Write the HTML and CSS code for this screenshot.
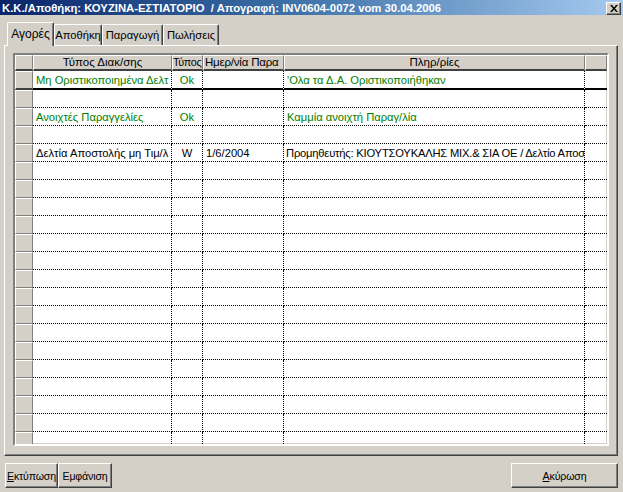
FILE: index.html
```html
<!DOCTYPE html>
<html lang="el">
<head>
<meta charset="utf-8">
<title>Απογραφή</title>
<link rel="stylesheet" href="styles.css">
</head>
<body>
<div class="window">
  <div class="titlebar">
    <span class="title-text">K.K./Αποθήκη: ΚΟΥΖΙΝΑ-ΕΣΤΙΑΤΟΡΙΟ &nbsp;/ Απογραφή: INV0604-0072 vom 30.04.2006</span>
    <span class="close-btn"><svg width="8" height="7" viewBox="0 0 8 7"><path d="M0 0h2l2 2.5L6 0h2L5 3.5 8 7H6L4 4.5 2 7H0l3-3.5z" fill="#000"/></svg></span>
  </div>
  <div class="content">
    <div class="tabs">
      <div class="tab active">Αγορές</div>
      <div class="tab t2">Αποθήκη</div>
      <div class="tab t3">Παραγωγή</div>
      <div class="tab t4">Πωλήσεις</div>
    </div>
    <div class="panel">
      <div class="grid">
        <table>
          <colgroup>
            <col class="c0"><col class="c1"><col class="c2"><col class="c3"><col class="c4"><col class="c5">
          </colgroup>
          <thead>
            <tr><th class="sel"></th><th>Τύπος Διακ/σης</th><th class="lft narrow">Τύπος</th><th class="lft">Ημερ/νία Παρα</th><th>Πληρ/ρίες</th><th class="last"></th></tr>
          </thead>
          <tbody>
            <tr class="green frozen"><td class="sel"></td><td>Μη Οριστικοποιημένα Δελτ</td><td class="ctr">Ok</td><td></td><td>'Ολα τα Δ.Α. Οριστικοποιήθηκαν</td><td class="last"></td></tr>
            <tr><td class="sel"></td><td></td><td></td><td></td><td></td><td class="last"></td></tr>
            <tr class="green"><td class="sel"></td><td>Ανοιχτές Παραγγελίες</td><td class="ctr">Ok</td><td></td><td>Καμμία ανοιχτή Παραγ/λία</td><td class="last"></td></tr>
            <tr><td class="sel"></td><td></td><td></td><td></td><td></td><td class="last"></td></tr>
            <tr><td class="sel"></td><td>Δελτία Αποστολής μη Τιμ/λ</td><td class="ctr">W</td><td>1/6/2004</td><td class="tight">Προμηθευτής: ΚΙΟΥΤΣΟΥΚΑΛΗΣ ΜΙΧ.&amp; ΣΙΑ ΟΕ / Δελτίο Αποσ</td><td class="last"></td></tr>
            <tr><td class="sel"></td><td></td><td></td><td></td><td></td><td class="last"></td></tr>
            <tr><td class="sel"></td><td></td><td></td><td></td><td></td><td class="last"></td></tr>
            <tr><td class="sel"></td><td></td><td></td><td></td><td></td><td class="last"></td></tr>
            <tr><td class="sel"></td><td></td><td></td><td></td><td></td><td class="last"></td></tr>
            <tr><td class="sel"></td><td></td><td></td><td></td><td></td><td class="last"></td></tr>
            <tr><td class="sel"></td><td></td><td></td><td></td><td></td><td class="last"></td></tr>
            <tr><td class="sel"></td><td></td><td></td><td></td><td></td><td class="last"></td></tr>
            <tr><td class="sel"></td><td></td><td></td><td></td><td></td><td class="last"></td></tr>
            <tr><td class="sel"></td><td></td><td></td><td></td><td></td><td class="last"></td></tr>
            <tr><td class="sel"></td><td></td><td></td><td></td><td></td><td class="last"></td></tr>
            <tr><td class="sel"></td><td></td><td></td><td></td><td></td><td class="last"></td></tr>
            <tr><td class="sel"></td><td></td><td></td><td></td><td></td><td class="last"></td></tr>
            <tr><td class="sel"></td><td></td><td></td><td></td><td></td><td class="last"></td></tr>
            <tr><td class="sel"></td><td></td><td></td><td></td><td></td><td class="last"></td></tr>
            <tr><td class="sel"></td><td></td><td></td><td></td><td></td><td class="last"></td></tr>
            <tr><td class="sel"></td><td></td><td></td><td></td><td></td><td class="last"></td></tr>
          </tbody>
        </table>
      </div>
    </div>
    <div class="buttons">
      <div class="left-buttons">
        <button class="btn b-print"><u>Ε</u>κτύπωση</button>
        <button class="btn b-show">Εμφάνιση</button>
      </div>
      <button class="btn b-cancel"><u>Α</u>κύρωση</button>
    </div>
  </div>
</div>
</body>
</html>
```

FILE: styles.css
```css
* { box-sizing: border-box; }
html, body {
  margin: 0;
  padding: 0;
  width: 623px;
  height: 492px;
  overflow: hidden;
  background: #d4d0c8;
  font-family: "Liberation Sans", Arial, sans-serif;
  font-size: 11px;
  color: #000;
}
.window { width: 623px; height: 492px; }
.titlebar {
  height: 15px;
  display: flex;
  align-items: center;
  justify-content: space-between;
  padding: 0 2px 0 2px;
  background: linear-gradient(to right, #0a246a 0%, #3a6ea5 45%, #a6caf0 100%);
}
.title-text {
  color: #fff;
  font-weight: bold;
  font-size: 11.3px;
  white-space: nowrap;
  line-height: 14px;
}
.close-btn {
  width: 15px;
  height: 13px;
  background: #d4d0c8;
  border: 1px solid;
  border-color: #fff #404040 #404040 #fff;
  box-shadow: inset -1px -1px 0 #808080;
  display: flex;
  align-items: center;
  justify-content: center;
  margin-top: 1px;
}
.content { padding: 7px 5px 0 4px; }
.tabs {
  display: flex;
  align-items: flex-end;
  height: 23px;
  padding-left: 3px;
}
.tab {
  height: 21px;
  border-top: 1px solid #fff;
  border-left: 1px solid #fff;
  border-right: 1px solid #404040;
  box-shadow: inset -1px 0 0 #808080;
  border-radius: 2px 2px 0 0;
  padding: 4px 0 0 0;
  text-align: center;
  white-space: nowrap;
  font-size: 11.2px;
}
.tab.active {
  height: 24px;
  width: 47px;
  margin-bottom: -1px;
  position: relative;
  z-index: 1;
  background: #d4d0c8;
  padding: 4px 0 0 0;
  font-size: 12px;
}
.t2 { width: 48px; }
.t3 { width: 61px; }
.t4 { width: 56px; }
.panel {
  width: 614px;
  height: 411px;
  border-top: 1px solid #fff;
  border-left: 1px solid #fff;
  border-right: 1px solid #404040;
  border-bottom: 1px solid #404040;
  box-shadow: inset -1px -1px 0 #808080;
  padding: 7px 0 0 8px;
}
.grid {
  width: 596px;
  height: 393px;
  border: 2px solid;
  border-color: #808080 #fff #fff #808080;
  box-shadow: inset 1px 1px 0 #404040, inset -1px -1px 0 #d4d0c8;
  background: #fff;
  overflow: hidden;
}
table {
  border-collapse: separate;
  border-spacing: 0;
  table-layout: fixed;
  width: 592px;
}
.c0 { width: 18px; }
.c1 { width: 139px; }
.c2 { width: 31px; }
.c3 { width: 81px; }
.c4 { width: 301px; }
.c5 { width: 22px; }
th {
  height: 16px;
  padding: 0 2px;
  font-weight: normal;
  text-align: center;
  background: #d4d0c8;
  border-top: 1px solid #fff;
  border-left: 1px solid #fff;
  border-right: 1px solid #808080;
  border-bottom: 2px solid #404040;
  white-space: nowrap;
  overflow: hidden;
  line-height: 13px;
  font-size: 11.5px;
}
th.lft { text-align: left; padding: 0 0 0 1px; letter-spacing: -0.2px; }
th.narrow { font-size: 10.8px; letter-spacing: -0.35px; padding-left: 0; }
td {
  height: 18px;
  padding: 0 3px;
  border-right: 1px dotted #000;
  border-bottom: 1px dotted #000;
  white-space: nowrap;
  overflow: hidden;
  line-height: 16px;
  font-size: 11.2px;
}
td.tight { letter-spacing: -0.2px; padding-left: 2px; padding-right: 0; }
td.ctr { text-align: center; }
td.sel {
  background: #d4d0c8;
  border-top: 1px solid #fff;
  border-left: 1px solid #fff;
  border-right: 1px solid #808080;
  border-bottom: 1px solid #808080;
}
td.last { border-right: none; }
tr.frozen td { border-bottom: 2px solid #000; height: 19px; }
tr.frozen td.sel { border-bottom: 2px solid #404040; }
tr.green td { color: #008000; }
.buttons {
  display: flex;
  justify-content: space-between;
  margin-top: 7px;
  padding-left: 1px;
}
.left-buttons { display: flex; }
.btn {
  height: 25px;
  font-family: "Liberation Sans", Arial, sans-serif;
  font-size: 10.6px;
  letter-spacing: -0.15px;
  background: #d4d0c8;
  color: #000;
  border: 1px solid;
  border-color: #fff #404040 #404040 #fff;
  box-shadow: inset -1px -1px 0 #808080;
  padding: 0;
  margin: 0;
  white-space: nowrap;
  overflow: visible;
}
.b-print { width: 53px; }
.b-show { width: 54px; }
.b-cancel { width: 107px; }
```
